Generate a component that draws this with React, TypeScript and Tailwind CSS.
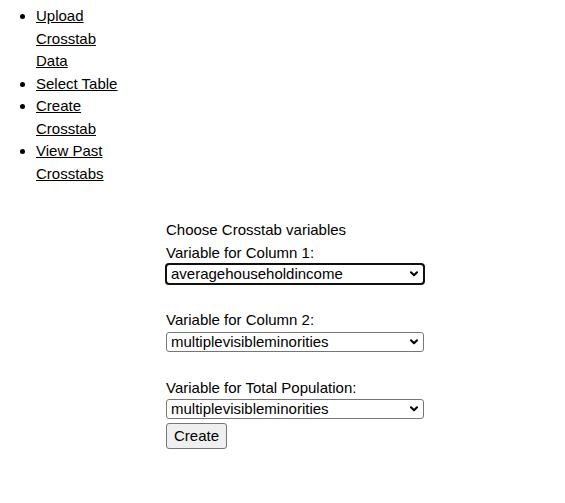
import React from 'react';

const navLinks = ['Upload Crosstab Data', 'Select Table', 'Create Crosstab', 'View Past Crosstabs'];

const options = ['averagehouseholdincome', 'multiplevisibleminorities', 'population', 'medianage'];

function Chevron() {
    return (
        <svg
            className="pointer-events-none absolute right-[6px] top-[7px]"
            width="8"
            height="6"
            viewBox="0 0 8 6"
            fill="none"
        >
            <path d="M1 1.2 L4 4.2 L7 1.2" stroke="#000" strokeWidth="2" strokeLinecap="round" strokeLinejoin="round" />
        </svg>
    );
}

function VarSelect({ value, focused }: { value: string; focused?: boolean }) {
    return (
        <div className="relative h-[22.5px] w-[258px]">
            <select
                defaultValue={value}
                className={`block h-5 w-full appearance-none rounded-[3px] border border-[#767676] bg-white pl-1 pr-5 text-[15px] leading-[18px] text-black ${
                    focused ? 'outline-2 -outline-offset-1 outline-[#101010]' : ''
                }`}
            >
                {options.map((o) => (
                    <option key={o} value={o}>
                        {o}
                    </option>
                ))}
            </select>
            <Chevron />
        </div>
    );
}

export default function App() {
    return (
        <div className="min-h-[503px] bg-white font-['Liberation_Sans',Arial,sans-serif] text-[15px] leading-[22.5px] text-black">
            <nav className="w-[126px] pt-[5px]">
                <ul className="list-disc pl-[36px]">
                    {navLinks.map((link) => (
                        <li key={link}>
                            <a href="#" className="text-black underline">
                                {link}
                            </a>
                        </li>
                    ))}
                </ul>
            </nav>

            <form className="ml-[166px] mt-[34px] flex flex-col items-start">
                <p>Choose Crosstab variables</p>
                <label>Variable for Column 1:</label>
                <VarSelect value="averagehouseholdincome" focused />
                <div className="h-[22.5px]" />
                <label>Variable for Column 2:</label>
                <VarSelect value="multiplevisibleminorities" />
                <div className="h-[22.5px]" />
                <label>Variable for Total Population:</label>
                <VarSelect value="multiplevisibleminorities" />
                <button
                    type="button"
                    className="mt-px rounded-[3px] border border-[#767676] bg-[#efefef] px-[7px] py-px text-[15px] leading-[22px] text-black"
                >
                    Create
                </button>
            </form>
        </div>
    );
}
